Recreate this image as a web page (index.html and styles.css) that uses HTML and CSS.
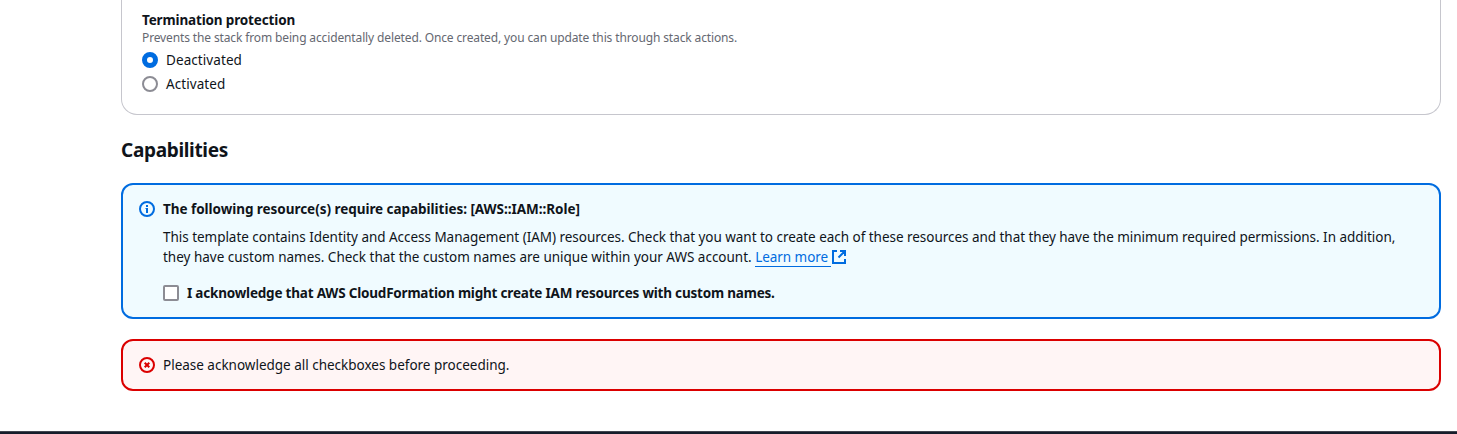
FILE: index.html
```html
<!DOCTYPE html>
<html lang="en">
<head>
<meta charset="utf-8">
<title>Create stack</title>
<link rel="stylesheet" href="styles.css">
</head>
<body>
<main class="page">
  <section class="panel">
    <div class="label">Termination protection</div>
    <div class="hint">Prevents the stack from being accidentally deleted. Once created, you can update this through stack actions.</div>
    <div class="option"><span class="radio radio-on"></span><span>Deactivated</span></div>
    <div class="option"><span class="radio"></span><span>Activated</span></div>
  </section>
  <h2 class="title">Capabilities</h2>
  <section class="alert info">
    <svg class="icon" viewBox="0 0 16 16" fill="none" stroke="currentColor" stroke-width="2"><circle cx="8" cy="8" r="7"/><path d="M8 4v2M8 7v5"/><path d="M6.5 7.5H8" stroke-width="1"/></svg>
    <div class="body">
      <div class="heading">The following resource(s) require capabilities: [AWS::IAM::Role]</div>
      <p class="text">This template contains Identity and Access Management (IAM) resources. Check that you want to create each of these resources and that they have the minimum required permissions. In addition,<br><span class="last-line">they have custom names. Check that the custom names are unique within your AWS account. </span><a class="link">Learn more</a><svg class="external" viewBox="0 0 16 16" fill="none" stroke="currentColor" stroke-width="2"><path d="M6 2H2v12h12v-4M9 2h5v5M14 2L7.5 8.5"/></svg></p>
      <div class="ack"><span class="checkbox"></span><span>I acknowledge that AWS CloudFormation might create IAM resources with custom names.</span></div>
    </div>
  </section>
  <section class="alert error">
    <svg class="icon" viewBox="0 0 16 16" fill="none" stroke="currentColor" stroke-width="2"><circle cx="8" cy="8" r="7"/><path d="M5.7 5.7l4.6 4.6M10.3 5.7l-4.6 4.6"/></svg>
    <div class="body message">Please acknowledge all checkboxes before proceeding.</div>
  </section>
</main>
<footer class="footer"></footer>
</body>
</html>
```
FILE: styles.css
```css
* { box-sizing: border-box; }
body {
  margin: 0;
  height: 434px;
  overflow: hidden;
  display: flex;
  flex-direction: column;
  justify-content: space-between;
  background: #fff;
  color: #0f141a;
  font: 13.5px/20px "Noto Sans", "Open Sans", sans-serif;
  letter-spacing: -0.034px;
  white-space: nowrap;
}
.page { padding: 0 16px 0 121px; }
.panel {
  height: 115px;
  padding: 10px 20px 0;
  border: 1px solid #c6c6cd;
  border-top: 0;
  border-radius: 0 0 16px 16px;
}
.label, .heading, .ack { font-weight: 700; }
.label { letter-spacing: -0.15px; }
.hint { font-size: 12px; line-height: 16px; color: #656871; letter-spacing: -0.132px; }
.option { display: flex; align-items: center; gap: 8px; height: 20px; margin-top: 4px; letter-spacing: 0.08px; }
.radio { width: 16px; height: 16px; border: 2px solid #8c8c94; border-radius: 50%; background: #fff; }
.radio-on { border: 5px solid #006ce0; }
.title { margin: 23px 0 21px; font-size: 19px; line-height: 24px; font-weight: 700; letter-spacing: -0.32px; }
.alert { display: flex; gap: 8px; padding: 14px 16px; border: 2px solid; border-radius: 12px; }
.info { height: 136px; color: #006ce0; background: #f0fbff; }
.error { height: 52px; margin-top: 20px; color: #db0000; background: #fff5f5; }
.icon { width: 16px; height: 16px; margin-top: 2px; flex: none; }
.body { color: #0f141a; }
.heading { letter-spacing: -0.04px; }
.text { margin: 8px 0 0; }
.last-line { letter-spacing: -0.008px; }
.link { color: #006ce0; padding-right: 3px; border-bottom: 1px solid #006ce0; letter-spacing: -0.05px; }
.external { width: 16px; height: 16px; color: #006ce0; vertical-align: -3px; }
.ack { display: flex; align-items: center; gap: 8px; margin-top: 16px; letter-spacing: -0.2px; }
.checkbox { width: 16px; height: 16px; border: 2px solid #8c8c94; border-radius: 2px; background: #fff; }
.message { letter-spacing: -0.01px; }
.footer { height: 3px; background: #161d2b; border-top: 1px solid #424650; }
```
